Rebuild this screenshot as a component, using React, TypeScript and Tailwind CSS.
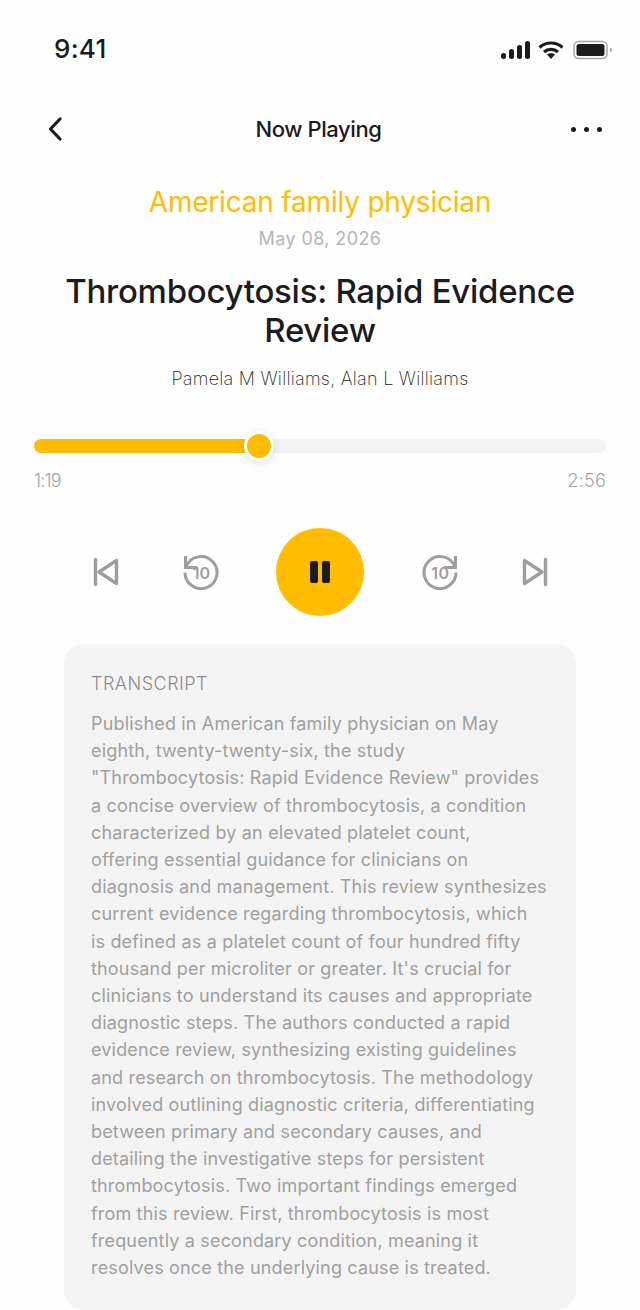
import React from "react";

const lines = [
  "Published in American family physician on May",
  "eighth, twenty-twenty-six, the study",
  "\"Thrombocytosis: Rapid Evidence Review\" provides",
  "a concise overview of thrombocytosis, a condition",
  "characterized by an elevated platelet count,",
  "offering essential guidance for clinicians on",
  "diagnosis and management. This review synthesizes",
  "current evidence regarding thrombocytosis, which",
  "is defined as a platelet count of four hundred fifty",
  "thousand per microliter or greater. It's crucial for",
  "clinicians to understand its causes and appropriate",
  "diagnostic steps. The authors conducted a rapid",
  "evidence review, synthesizing existing guidelines",
  "and research on thrombocytosis. The methodology",
  "involved outlining diagnostic criteria, differentiating",
  "between primary and secondary causes, and",
  "detailing the investigative steps for persistent",
  "thrombocytosis. Two important findings emerged",
  "from this review. First, thrombocytosis is most",
  "frequently a secondary condition, meaning it",
  "resolves once the underlying cause is treated.",
];

const StatusIcons = () => (
  <div className="flex items-center gap-[8px] translate-y-[1px]">
    <svg width="30" height="20" viewBox="0 0 30 20" fill="#1c1c1c">
      <rect x="1" y="13" width="5" height="6" rx="2.5" />
      <rect x="9" y="9" width="5" height="10" rx="2.5" />
      <rect x="17" y="5" width="5" height="14" rx="2.5" />
      <rect x="25" y="1" width="5" height="18" rx="2.5" />
    </svg>
    <svg width="26" height="20" viewBox="0 0 26 20" fill="none" stroke="#1c1c1c" strokeWidth="3.2">
      <path d="M1.5 7.5C7.8 1.5 18.2 1.5 24.5 7.5" />
      <path d="M6 12C10 8.5 16 8.5 20 12" />
      <path d="M13 19l-4-4.4c2.2-1.8 5.8-1.8 8 0z" fill="#1c1c1c" stroke="none" />
    </svg>
    <svg width="40" height="20" viewBox="0 0 40 20" fill="none" className="ml-[1px]">
      <rect x="1" y="1.5" width="33" height="17" rx="4.5" stroke="#a8a8a8" strokeWidth="1.5" />
      <rect x="3.5" y="4" width="28" height="12" rx="2.5" fill="#1c1c1c" />
      <path d="M37 7.5c1.4.4 2 1.3 2 2.5s-.6 2.1-2 2.5z" fill="#a8a8a8" />
    </svg>
  </div>
);

const Replay = ({ flip }: { flip?: boolean }) => (
  <svg width="36" height="36" viewBox="0 0 36 36" fill="none" stroke="#9e9e9e" strokeWidth="3">
    <g transform={flip ? "translate(36 0) scale(-1 1)" : undefined}>
      <path d="M3.2 12.5A16 16 0 1 1 2 18.5" />
      <path d="M2.5 3.5v10h10" strokeLinecap="square" strokeLinejoin="miter" />
    </g>
  </svg>
);

export default function App() {
  return (
    <div
      className="w-[640px] h-[1310px] overflow-hidden bg-[#fefefe] text-[#1c1c1c]"
      style={{ fontFamily: "Inter, 'Noto Sans', sans-serif" }}
    >
      <div className="flex items-center justify-between pl-[54px] pr-[27px] pt-[34px] h-[64px]">
        <span className="text-[26px] leading-[30px] font-medium tracking-[0.3px]">9:41</span>
        <StatusIcons />
      </div>

      <div className="relative flex items-center justify-between pl-[44px] pr-[38px] mt-[49px] h-[32px]">
        <svg width="22" height="26" viewBox="0 0 22 26" fill="none" stroke="#1c1c1c" strokeWidth="3.2" strokeLinecap="round" strokeLinejoin="round">
          <path d="M16 3L6.5 13L16 23" />
        </svg>
        <span className="text-[22px] font-medium tracking-[-0.4px]">Now Playing</span>
        <div className="flex gap-[8px]">
          <span className="w-[5px] h-[5px] rounded-full bg-[#1c1c1c]" />
          <span className="w-[5px] h-[5px] rounded-full bg-[#1c1c1c]" />
          <span className="w-[5px] h-[5px] rounded-full bg-[#1c1c1c]" />
        </div>
      </div>

      <div className="flex flex-col items-center text-center mt-[39px]">
        <div className="text-[28px] leading-[36px] text-[#ffbc00] tracking-[-0.2px]">American family physician</div>
        <div className="text-[18px] leading-[24px] mt-[7px] text-[#b5b5b5] tracking-[0.4px]">May 08, 2026</div>
        <h1 className="text-[33px] leading-[39px] font-medium mt-[21px] tracking-[-0.27px]">
          Thrombocytosis: Rapid Evidence
          <br />
          Review
        </h1>
        <div className="text-[18px] leading-[24px] font-extralight mt-[17px] tracking-[0.25px]">Pamela M Williams, Alan L Williams</div>
      </div>

      <div className="px-[34px] mt-[48px]">
        <div className="relative h-[14px] rounded-full bg-[#f3f3f3]">
          <div className="h-[14px] w-[226px] rounded-full bg-[#ffbc00]" />
          <div className="absolute left-[210px] top-[-8px] w-[30px] h-[30px] rounded-full bg-[#ffbc00] border-[3px] border-white shadow-[0_2px_8px_rgba(0,0,0,0.12)]" />
        </div>
        <div className="flex justify-between mt-[16px] text-[18px] leading-[24px] font-light text-[#a3a3a3]">
          <span className="tracking-[-0.8px]">1:19</span>
          <span className="tracking-[0.2px]">2:56</span>
        </div>
      </div>

      <div className="flex items-center pl-[92px] mt-[34px] h-[90px]">
        <svg width="28" height="30" viewBox="0 0 28 30" fill="none" stroke="#9e9e9e" strokeWidth="3.4" strokeLinejoin="round" strokeLinecap="round">
          <path d="M3.5 2.5V27.5" />
          <path d="M24.5 3.5V26.5L7 15Z" />
        </svg>
        <div className="relative w-[36px] h-[36px] ml-[63px]">
          <Replay />
          <span className="absolute inset-0 flex items-center justify-center pl-[1px] pt-[1px] text-[16px] font-semibold text-[#9e9e9e] tracking-[0.2px]">10</span>
        </div>
        <div className="w-[88px] h-[88px] ml-[57px] rounded-full bg-[#ffbc00] flex items-center justify-center gap-[4px]">
          <span className="w-[8px] h-[22px] rounded-[2px] bg-[#1c1c1c]" />
          <span className="w-[8px] h-[22px] rounded-[2px] bg-[#1c1c1c]" />
        </div>
        <div className="relative w-[36px] h-[36px] ml-[58px]">
          <Replay flip />
          <span className="absolute inset-0 flex items-center justify-center pl-[1px] pt-[1px] text-[16px] font-semibold text-[#9e9e9e] tracking-[0.6px]">10</span>
        </div>
        <svg width="28" height="30" viewBox="0 0 28 30" fill="none" stroke="#9e9e9e" strokeWidth="3.4" strokeLinejoin="round" strokeLinecap="round" className="ml-[63px]">
          <path d="M24.5 2.5V27.5" />
          <path d="M3.5 3.5V26.5L21 15Z" />
        </svg>
      </div>

      <div className="mx-[64px] mt-[27px] h-[666px] rounded-[20px] bg-[#f4f4f4] px-[27px] pt-[26px] text-[#a0a0a0]">
        <div className="text-[18px] leading-[27px] font-light tracking-[0.5px] text-[#8c8c8c]">TRANSCRIPT</div>
        <div className="mt-[13px] text-[18px] leading-[27.2px] tracking-[0.17px]">
          {lines.map((line) => (
            <div key={line} className="whitespace-nowrap">{line}</div>
          ))}
        </div>
      </div>
    </div>
  );
}
